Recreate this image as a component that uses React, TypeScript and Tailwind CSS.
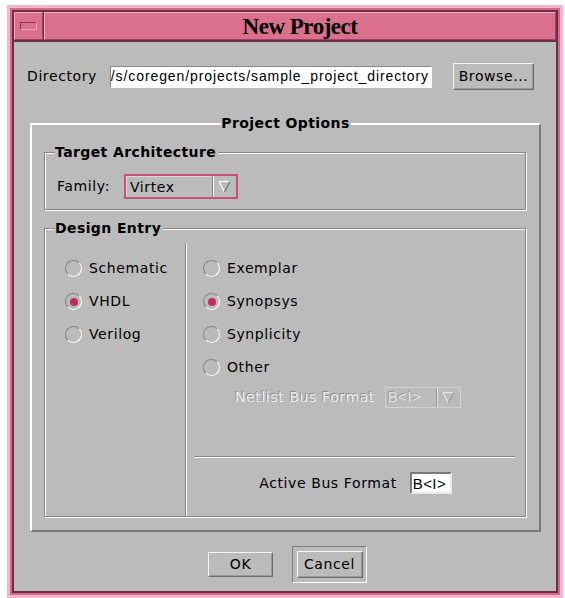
import type { ReactNode } from 'react';

const ui = "font-['DejaVu_Sans','Liberation_Sans',sans-serif] text-[14px] tracking-[0.6px] text-black";
const bold = "font-['DejaVu_Sans','Liberation_Sans',sans-serif] text-[14px] font-bold tracking-[0.4px] text-black";

// little down-pointing arrow used by the option menus
function Arrow({ dim = false }: { dim?: boolean }) {
 return (<svg width="13" height="13" viewBox="0 0 13 13">
 <path d="M1 1.5 H12" stroke={dim ? '#e8e8e8' : '#ffffff'} strokeWidth="1.2" fill="none"/>
 <path d="M1 1.5 L6.5 12" stroke={dim ? '#e8e8e8' : '#ffffff'} strokeWidth="1.2" fill="none"/>
 <path d="M12 1.5 L6.5 12" stroke={dim ? '#9a9a9a' : '#6f6f6f'} strokeWidth="1.2" fill="none"/>
 </svg>);
}

function Radio({ label, checked = false }: { label: string; checked?: boolean }) {
 return (<div className="h-[33px] flex items-center gap-[7px]">
 <span className="w-[17px] h-[17px] rounded-full border border-t-[#858585] border-l-[#858585] border-r-white border-b-white flex items-center justify-center">
 {checked && <span className="w-[8px] h-[8px] rounded-full bg-[#c42a5c]"/>}
 </span>
 <span className={ui}>{label}</span>
 </div>);
}

function Group({ title, className, children }: { title: string; className: string; children: ReactNode }) {
 return (<div className={`relative border border-[#858585] shadow-[inset_1px_1px_0_#fff,1px_1px_0_#fff] ${className}`}>
 <span className={`absolute left-[10px] -top-[10px] bg-[#bbbbbb] pr-[2px] leading-[18px] ${bold}`}>{title}</span>
 {children}
 </div>);
}

function Button({ label, className }: { label: string; className: string }) {
 return (<button className={`border border-t-[#f4f4f4] border-l-[#f4f4f4] border-r-[#6c6c6c] border-b-[#6c6c6c] shadow-[inset_-1px_-1px_0_#9a9a9a] bg-[#bbbbbb] flex items-center justify-center ${ui} ${className}`}>
 {label}
 </button>);
}

export default function App() {
 return (<div className="w-[565px] h-[598px] bg-white pl-[7px] pt-[5px]">
 <div className="w-[556px] h-[593px] border-[3px] border-[#f4b6ca]">
 <div className="h-full border-2 border-[#d4678b]">
 <div className="h-full border-2 border-[#6c2e45] bg-[#6c2e45] flex flex-col">
 {/* title bar */}
 <div className="h-[28px] flex gap-px mb-[2px]">
 <div className="w-[29px] bg-[#db6f8e] border border-t-[#f3a9bf] border-l-[#f3a9bf] border-r-[#9d4462] border-b-[#9d4462] flex items-center justify-center">
 <span className="w-[17px] h-[8px] border border-t-[#8e3a57] border-l-[#8e3a57] border-r-[#f3a9bf] border-b-[#f3a9bf]"/>
 </div>
 <div className="flex-1 bg-[#db6f8e] border border-t-[#f3a9bf] border-l-[#f3a9bf] border-r-[#9d4462] border-b-[#9d4462] flex items-center justify-center">
 <span className="font-['Liberation_Serif','Times_New_Roman',serif] text-[23px] font-bold tracking-[-0.5px] text-black leading-none">New Project</span>
 </div>
 </div>

 {/* dialog body */}
 <div className="flex-1 bg-[#bbbbbb] pt-[21px] flex flex-col">
 <div className="h-[27px] flex items-center">
 <span className={`w-[96px] pl-[13px] ${ui}`}>Directory</span>
 <div className="w-[322px] h-[22px] bg-white border border-t-[#8a8a8a] border-l-[#8a8a8a] border-r-white border-b-white overflow-hidden flex items-center justify-end pr-[2px]">
 <span className="font-['Liberation_Sans',Arial,sans-serif] text-[14px] tracking-[0.9px] text-black whitespace-nowrap">/s/coregen/projects/sample_project_directory</span>
 </div>
 <Button label="Browse..." className="ml-[21px] w-[81px] h-[27px]"/>
 </div>

 {/* project options */}
 <div className="relative mt-[33px] ml-[16px] w-[511px] h-[409px] border-2 border-t-white border-l-white border-r-[#7b7b7b] border-b-[#7b7b7b] pt-[27px] pl-[12px]">
 <span className={`absolute left-1/2 -translate-x-1/2 -top-[11px] bg-[#bbbbbb] px-[1px] leading-[18px] ${bold}`}>Project Options</span>

 <Group title="Target Architecture" className="w-[482px] h-[58px] pt-[21px] pl-[12px]">
 <div className="flex items-center">
 <span className={`w-[67px] ${ui}`}>Family:</span>
 <div className="w-[114px] h-[25px] border-2 border-[#c7517c] flex">
 <div className="flex-1 flex items-center pl-[3px] border-t border-l border-t-[#d9d9d9] border-l-[#d9d9d9]">
 <span className={ui}>Virtex</span>
 </div>
 <div className="w-[24px] border-l border-l-[#7d7d7d] shadow-[inset_1px_0_0_#fff] flex items-center justify-center">
 <Arrow/>
 </div>
 </div>
 </div>
 </Group>

 <Group title="Design Entry" className="mt-[18px] w-[482px] h-[289px] flex">
 <div className="w-[140px] pl-[20px] pt-[23px] flex flex-col">
 <Radio label="Schematic"/>
 <Radio label="VHDL" checked/>
 <Radio label="Verilog"/>
 </div>
 <div className="mt-[14px] w-px bg-[#858585] shadow-[1px_0_0_#fff]"/>
 <div className="flex-1 pt-[23px] flex flex-col">
 <div className="pl-[17px] flex flex-col">
 <Radio label="Exemplar"/>
 <Radio label="Synopsys" checked/>
 <Radio label="Synplicity"/>
 <Radio label="Other"/>
 </div>
 <div className="mt-[3px] pl-[49px] flex items-center h-[21px]">
 <span className={`${ui} text-[#ededed]! [text-shadow:-1px_-1px_0_#8c8c8c] w-[150px]`}>Netlist Bus Format</span>
 <div className="w-[76px] h-[21px] border border-[#d2d2d2] flex">
 <div className="flex-1 flex items-center pl-[2px]">
 <span className="font-['Liberation_Sans',Arial,sans-serif] text-[14px] tracking-[1px] text-[#e4e4e4] [text-shadow:-1px_-1px_0_#9a9a9a]">B&lt;I&gt;</span>
 </div>
 <div className="w-[24px] border-l border-l-[#9a9a9a] shadow-[inset_1px_0_0_#e0e0e0] flex items-center justify-center">
 <Arrow dim/>
 </div>
 </div>
 </div>
 <div className="mt-[48px] ml-[8px] mr-[10px] h-px bg-[#858585] shadow-[0_1px_0_#fff]"/>
 <div className="mt-[15px] flex items-center justify-center gap-[13px]">
 <span className={ui}>Active Bus Format</span>
 <div className="w-[42px] h-[22px] bg-white border-2 border-t-[#7a7a7a] border-l-[#7a7a7a] border-r-[#e8e8e8] border-b-[#e8e8e8] flex items-center pl-[1px]">
 <span className="font-['Liberation_Sans',Arial,sans-serif] text-[15px] tracking-[0.4px] text-black leading-none">B&lt;I&gt;</span>
 </div>
 </div>
 </div>
 </Group>
 </div>

 {/* dialog buttons */}
 <div className="mt-[14px] ml-[5px] flex items-center justify-center gap-[19px]">
 <Button label="OK" className="w-[65px] h-[25px]"/>
 <div className="w-[75px] h-[37px] border border-t-[#7d7d7d] border-l-[#7d7d7d] border-r-white border-b-white flex items-center justify-center">
 <Button label="Cancel" className="w-[66px] h-[27px]"/>
 </div>
 </div>
 </div>
 </div>
 </div>
 </div>
 </div>);
}
